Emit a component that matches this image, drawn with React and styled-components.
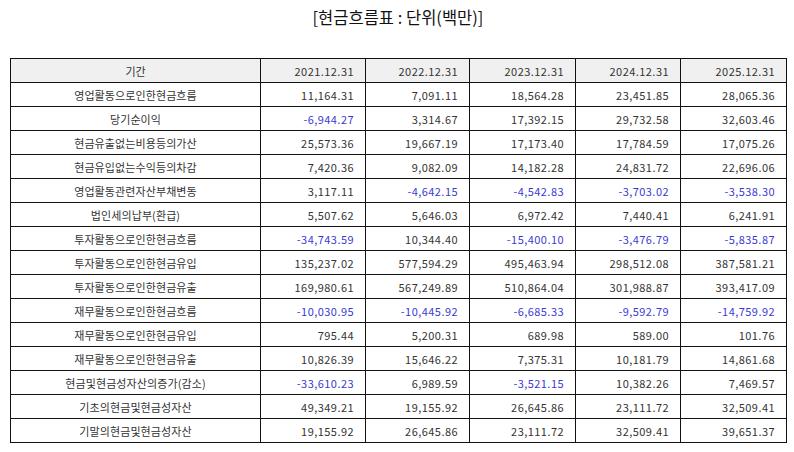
import React from 'react';
import styled, { createGlobalStyle } from 'styled-components';

const GlobalStyle = createGlobalStyle`
  html, body {
    margin: 0;
    padding: 0;
    background: #fff;
  }
  body {
    font-family: "Noto Sans CJK KR", "Noto Sans", sans-serif;
    color: #222;
  }
`;

const Page = styled.div`
  width: 794px;
  height: 452px;
  padding: 5px 8px 0 10px;
  box-sizing: border-box;
`;

const Title = styled.h1`
  margin: 0 0 29px;
  height: 24px;
  line-height: 24px;
  text-align: center;
  font-size: 16.5px;
  font-weight: 400;
  color: #111;
`;

const Table = styled.table`
  width: 776px;
  border-collapse: collapse;
  table-layout: fixed;
  font-size: 11px;
`;

const HeadCell = styled.th`
  height: 23px;
  padding: 0 11px;
  border: 1.3px solid #111;
  background: #f0f0f0;
  font-weight: 400;
  color: #333;
  letter-spacing: ${p => (p.$label ? '0' : '0.45px')};
  text-align: ${p => (p.$label ? 'center' : 'right')};
`;

const Cell = styled.td`
  height: 23px;
  padding: 0 11px;
  border: 1.3px solid #111;
  white-space: nowrap;
  letter-spacing: ${p => (p.$label ? '0.1px' : '0.45px')};
  text-align: ${p => (p.$label ? 'center' : 'right')};
  color: ${p => (p.$negative ? '#3a3ad2' : '#333')};
`;

const periods = ['2021.12.31', '2022.12.31', '2023.12.31', '2024.12.31', '2025.12.31'];

const rows = [
  ['영업활동으로인한현금흐름', '11,164.31', '7,091.11', '18,564.28', '23,451.85', '28,065.36'],
  ['당기순이익', '-6,944.27', '3,314.67', '17,392.15', '29,732.58', '32,603.46'],
  ['현금유출없는비용등의가산', '25,573.36', '19,667.19', '17,173.40', '17,784.59', '17,075.26'],
  ['현금유입없는수익등의차감', '7,420.36', '9,082.09', '14,182.28', '24,831.72', '22,696.06'],
  ['영업활동관련자산부채변동', '3,117.11', '-4,642.15', '-4,542.83', '-3,703.02', '-3,538.30'],
  ['법인세의납부(환급)', '5,507.62', '5,646.03', '6,972.42', '7,440.41', '6,241.91'],
  ['투자활동으로인한현금흐름', '-34,743.59', '10,344.40', '-15,400.10', '-3,476.79', '-5,835.87'],
  ['투자활동으로인한현금유입', '135,237.02', '577,594.29', '495,463.94', '298,512.08', '387,581.21'],
  ['투자활동으로인한현금유출', '169,980.61', '567,249.89', '510,864.04', '301,988.87', '393,417.09'],
  ['재무활동으로인한현금흐름', '-10,030.95', '-10,445.92', '-6,685.33', '-9,592.79', '-14,759.92'],
  ['재무활동으로인한현금유입', '795.44', '5,200.31', '689.98', '589.00', '101.76'],
  ['재무활동으로인한현금유출', '10,826.39', '15,646.22', '7,375.31', '10,181.79', '14,861.68'],
  ['현금및현금성자산의증가(감소)', '-33,610.23', '6,989.59', '-3,521.15', '10,382.26', '7,469.57'],
  ['기초의현금및현금성자산', '49,349.21', '19,155.92', '26,645.86', '23,111.72', '32,509.41'],
  ['기말의현금및현금성자산', '19,155.92', '26,645.86', '23,111.72', '32,509.41', '39,651.37'],
];

const widths = [250, 105, 104, 106, 105, 106];

export default function App() {
  return (
    <>
      <GlobalStyle />
      <Page>
        <Title>[현금흐름표 : 단위(백만)]</Title>
        <Table>
          <colgroup>
            {widths.map((w, i) => <col key={i} style={{ width: w }} />)}
          </colgroup>
          <thead>
            <tr>
              <HeadCell $label>기간</HeadCell>
              {periods.map(p => <HeadCell key={p}>{p}</HeadCell>)}
            </tr>
          </thead>
          <tbody>
            {rows.map(([label, ...values]) => (
              <tr key={label}>
                <Cell $label>{label}</Cell>
                {values.map((v, i) => (
                  <Cell key={i} $negative={v.startsWith('-')}>{v}</Cell>
                ))}
              </tr>
            ))}
          </tbody>
        </Table>
      </Page>
    </>
  );
}
